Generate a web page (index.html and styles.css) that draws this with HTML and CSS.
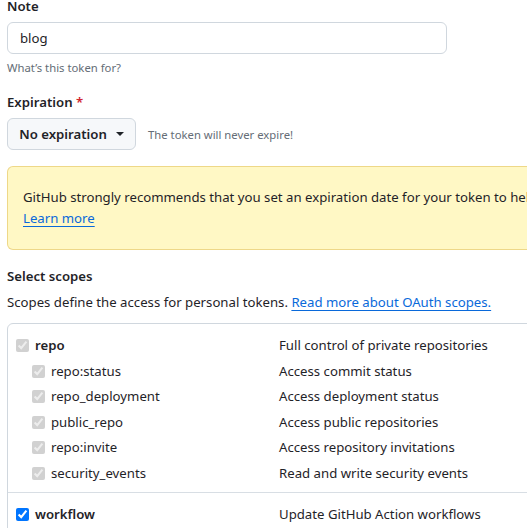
FILE: index.html
```html
<!DOCTYPE html>
<html>
<head>
<meta charset="utf-8">
<link rel="stylesheet" href="styles.css">
</head>
<body>
<div class="page">
  <div class="field">
    <label class="label label-note">Note</label>
    <div class="input">blog</div>
    <p class="hint">What’s this token for?</p>
  </div>

  <div class="field">
    <label class="label label-exp">Expiration <span class="req">*</span></label>
    <div class="exp-row">
      <button class="btn">No expiration <span class="caret"></span></button>
      <span class="exp-note">The token will never expire!</span>
    </div>
  </div>

  <div class="flash">
    <p>GitHub strongly recommends that you set an expiration date for your token to help keep your information secure.</p>
    <a class="link" href="#">Learn more</a>
  </div>

  <h3 class="label scopes-title">Select scopes</h3>
  <p class="scopes-desc">Scopes define the access for personal tokens. <a class="link" href="#">Read more about OAuth scopes.</a></p>

  <div class="scopes">
    <div class="group">
      <div class="row">
        <label class="name top"><input type="checkbox" checked disabled>repo</label>
        <span class="desc">Full control of private repositories</span>
      </div>
      <div class="row">
        <label class="name sub"><input type="checkbox" checked disabled>repo:status</label>
        <span class="desc">Access commit status</span>
      </div>
      <div class="row">
        <label class="name sub"><input type="checkbox" checked disabled>repo_deployment</label>
        <span class="desc">Access deployment status</span>
      </div>
      <div class="row">
        <label class="name sub"><input type="checkbox" checked disabled>public_repo</label>
        <span class="desc">Access public repositories</span>
      </div>
      <div class="row">
        <label class="name sub"><input type="checkbox" checked disabled>repo:invite</label>
        <span class="desc">Access repository invitations</span>
      </div>
      <div class="row">
        <label class="name sub"><input type="checkbox" checked disabled>security_events</label>
        <span class="desc">Read and write security events</span>
      </div>
    </div>
    <div class="group">
      <div class="row">
        <label class="name top"><input type="checkbox" checked>workflow</label>
        <span class="desc">Update GitHub Action workflows</span>
      </div>
    </div>
  </div>
</div>
</body>
</html>
```

FILE: styles.css
```css
html, body {
  margin: 0;
  padding: 0;
  overflow: hidden;
  background: #ffffff;
}
body {
  font-family: "Noto Sans", "Open Sans", sans-serif;
  font-size: 13.2px;
  color: #1f2328;
}
.page {
  width: 820px;
  padding-left: 7px;
  display: flex;
  flex-direction: column;
}
.field {
  display: flex;
  flex-direction: column;
}
.label {
  display: block;
  font-weight: 600;
  font-size: 13.2px;
  margin: 0;
}
.label-note {
  line-height: 12px;
  margin-bottom: 10px;
}
.input {
  box-sizing: border-box;
  width: 440px;
  height: 32px;
  border: 1px solid #d0d7de;
  border-radius: 6px;
  padding: 0 12px;
  line-height: 30px;
}
.hint {
  margin: 5px 0 0;
  font-size: 11.3px;
  line-height: 18px;
  color: #656d76;
}
.label-exp {
  line-height: 21px;
  margin-top: 15px;
  margin-bottom: 5px;
}
.req {
  color: #d1242f;
}
.exp-row {
  display: flex;
  align-items: center;
  gap: 12px;
}
.btn {
  box-sizing: border-box;
  height: 32px;
  width: 129px;
  padding: 0 10px;
  display: inline-flex;
  align-items: center;
  justify-content: center;
  gap: 9px;
  white-space: nowrap;
  background: #f6f8fa;
  border: 1px solid #d0d7de;
  border-radius: 6px;
  font-family: inherit;
  font-size: 13.2px;
  font-weight: 600;
  color: #1f2328;
}
.caret {
  width: 0;
  height: 0;
  border-left: 4px solid transparent;
  border-right: 4px solid transparent;
  border-top: 4px solid #1f2328;
}
.exp-note {
  font-size: 11.3px;
  color: #656d76;
}
.flash {
  box-sizing: border-box;
  margin-top: 16px;
  padding: 20px 15px;
  background: #fff8c5;
  border: 1px solid rgba(212, 167, 44, 0.4);
  border-radius: 6px;
  line-height: 21px;
  display: flex;
  flex-direction: column;
}
.flash p {
  margin: 0;
  white-space: nowrap;
}
.link {
  color: #0969da;
  text-decoration: underline;
  text-underline-offset: 3px;
}
.flash .link {
  align-self: flex-start;
}
.scopes-title {
  margin-top: 16px;
  line-height: 21px;
}
.scopes-desc {
  margin: 5px 0 0;
  line-height: 21px;
}
.scopes {
  margin-top: 10px;
  border: 1px solid #d0d7de;
  border-radius: 6px;
}
.group {
  padding: 9px 0 6px;
}
.group + .group {
  border-top: 1px solid #d8dee4;
}
.row {
  display: grid;
  grid-template-columns: 271px 1fr;
  line-height: 25.5px;
}
.name {
  display: flex;
  align-items: center;
  gap: 3px;
}
.name.top {
  font-weight: 600;
  padding-left: 4px;
}
.name.sub {
  padding-left: 20px;
}
.name input {
  margin: 0 3px 0 4px;
  width: 13px;
  height: 13px;
}
.desc {
  color: #1f2328;
}
```
